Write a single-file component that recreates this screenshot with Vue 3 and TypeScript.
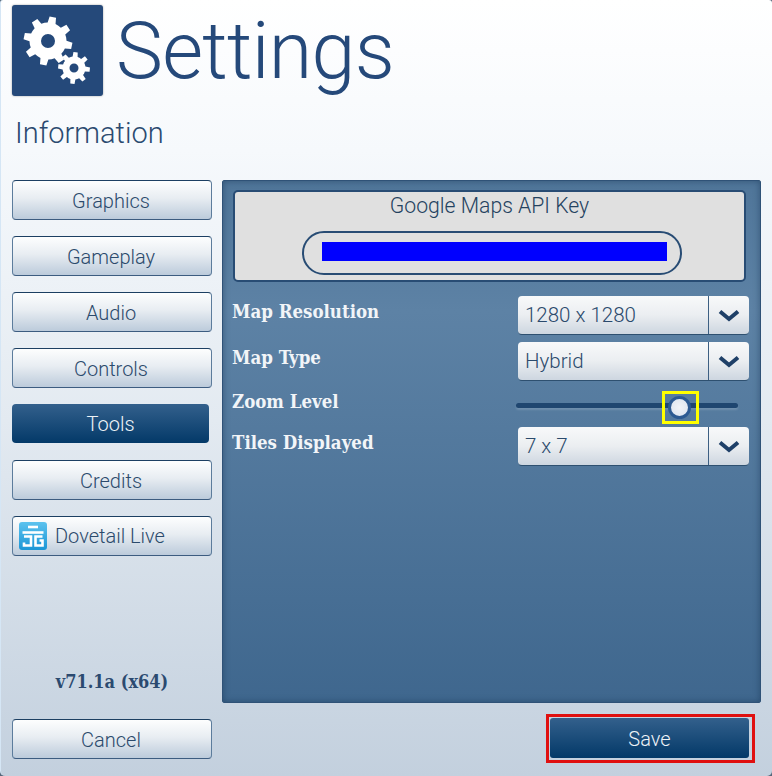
<script setup lang="ts">
const navItems = ["Graphics", "Gameplay", "Audio", "Controls", "Tools", "Credits"];

// builds a cog outline with a round hole in the middle
const gearPath = (cx: number, cy: number, outer: number, inner: number, hole: number, teeth: number, start = 0) => {
  const step = (Math.PI * 2) / teeth;
  const pts: string[] = [];
  for (let i = 0; i < teeth; i++) {
    const a = start + i * step;
    const corners: [number, number][] = [
      [a - step * 0.5, inner],
      [a - step * 0.28, inner],
      [a - step * 0.17, outer],
      [a + step * 0.17, outer],
      [a + step * 0.28, inner],
    ];
    for (const [ang, r] of corners) {
      pts.push(`${(cx + r * Math.cos(ang)).toFixed(2)} ${(cy + r * Math.sin(ang)).toFixed(2)}`);
    }
  }
  const ring = `M${cx - hole} ${cy}a${hole} ${hole} 0 1 0 ${hole * 2} 0a${hole} ${hole} 0 1 0 ${-hole * 2} 0Z`;
  return `M${pts.join("L")}Z${ring}`;
};

const bigGear = gearPath(36, 36, 24.5, 18.5, 7, 8, 0.2);
const smallGear = gearPath(62, 63, 16, 11.5, 4.5, 8, 0.1);
</script>

<template>
  <div class="page">
    <header class="head">
      <div class="logo">
        <svg width="91" height="91" viewBox="0 0 91 91">
          <path :d="bigGear" fill="#fff" fill-rule="evenodd" />
          <path :d="smallGear" fill="#fff" fill-rule="evenodd" />
        </svg>
      </div>
      <h1>Settings</h1>
    </header>
    <h2>Information</h2>

    <div class="main">
      <aside class="side">
        <nav class="nav">
          <button v-for="item in navItems" :key="item" class="btn" :class="{ active: item === 'Tools' }">{{ item }}</button>
          <button class="btn live">
            <svg class="live-logo" width="28" height="28" viewBox="0 0 28 28">
              <defs>
                <linearGradient id="liveBg" x1="0" y1="0" x2="0" y2="1">
                  <stop offset="0" stop-color="#5cc2ee" />
                  <stop offset="1" stop-color="#1c96d6" />
                </linearGradient>
              </defs>
              <rect width="28" height="28" rx="3" fill="url(#liveBg)" />
              <g fill="none" stroke="#fff" stroke-width="2.6">
                <path d="M9 5h10" />
                <path d="M3.5 10.5h21" />
                <path d="M5 14.5h7v9h-7v-3" />
                <path d="M23.5 14.5h-7v9h7v-5h-3" />
              </g>
            </svg>
            Dovetail Live
          </button>
        </nav>
        <div class="version">v71.1a (x64)</div>
        <button class="btn">Cancel</button>
      </aside>

      <div class="right">
        <section class="panel">
          <div class="key-card">
            <div class="key-title">Google Maps API Key</div>
            <div class="key-input"><span class="key-mask"></span></div>
          </div>

          <div class="rows">
            <label class="lbl">Map Resolution</label>
            <div class="select"><span>1280 x 1280</span><i class="arrow"><svg width="22" height="13" viewBox="0 0 22 13"><path d="M2 2.5 11 10l9-7.5" fill="none" stroke="#1f4068" stroke-width="4" /></svg></i></div>

            <label class="lbl">Map Type</label>
            <div class="select"><span>Hybrid</span><i class="arrow"><svg width="22" height="13" viewBox="0 0 22 13"><path d="M2 2.5 11 10l9-7.5" fill="none" stroke="#1f4068" stroke-width="4" /></svg></i></div>

            <label class="lbl zoom-lbl">Zoom Level</label>
            <div class="slider">
              <div class="track"></div>
              <div class="thumb-box"><span class="thumb"></span></div>
            </div>

            <label class="lbl">Tiles Displayed</label>
            <div class="select"><span>7 x 7</span><i class="arrow"><svg width="22" height="13" viewBox="0 0 22 13"><path d="M2 2.5 11 10l9-7.5" fill="none" stroke="#1f4068" stroke-width="4" /></svg></i></div>
          </div>
        </section>

        <div class="foot">
          <div class="save-ring"><button class="btn active save">Save</button></div>
        </div>
      </div>
    </div>
  </div>
</template>

<style>
html,
body {
  margin: 0;
  background: #55677a;
}
</style>

<style scoped>
.page {
  box-sizing: border-box;
  width: 772px;
  height: 776px;
  padding: 5px 11px 0 11px;
  border-left: 1px solid #d5e6f5;
  border-radius: 3px 3px 5px 5px;
  background: linear-gradient(#ffffff 0, #f6f9fc 150px, #e3eaf1 420px, #c3d0de 776px);
  font-family: Roboto, sans-serif;
  color: #2b4a70;
  overflow: hidden;
}
.head {
  display: flex;
  align-items: flex-start;
  height: 92px;
}
.logo {
  width: 91px;
  height: 91px;
  border-radius: 3px;
  background: #25497a;
  box-shadow: 0 0 2px rgba(0, 0, 0, 0.4);
  flex: none;
}
.logo svg {
  display: block;
}
h1 {
  margin: 0 0 0 13px;
  font-family: Roboto, sans-serif;
  font-weight: 300;
  font-size: 79px;
  line-height: 92px;
  height: 100px;
  letter-spacing: -0.7px;
  color: #25497a;
}
h2 {
  margin: 17px 0 0 3px;
  height: 39px;
  font-weight: 300;
  font-size: 29px;
  line-height: 39px;
  color: #2b4a70;
}
.main {
  display: flex;
  margin-top: 27px;
  height: 584px;
}
.side {
  width: 200px;
  flex: none;
  display: flex;
  flex-direction: column;
}
.nav {
  display: flex;
  flex-direction: column;
  gap: 16px;
}
.btn {
  box-sizing: border-box;
  display: block;
  width: 200px;
  height: 40px;
  padding: 1px 2px 0 0;
  border: 1px solid #1e4468;
  border-color: #1c3f62 #5c7c9c #3c5c80;
  border-radius: 4px;
  background: linear-gradient(#fdfefe 0, #e8edf2 45%, #bccbdb 100%);
  font-family: Roboto, sans-serif;
  font-size: 20px;
  font-weight: 300;
  color: #2b4a6c;
  text-align: center;
}
.btn.active {
  width: 197px;
  height: 39px;
  margin-bottom: 1px;
  padding: 0;
  border: 0;
  background: linear-gradient(#33608c 0, #033968 100%);
  color: #eef3f7;
}
.live {
  display: flex;
  align-items: center;
  padding: 0 0 0 6px;
  gap: 8px;
}
.live-logo {
  flex: none;
}
.version {
  margin-top: 113px;
  height: 50px;
  text-align: center;
  font-family: "DejaVu Serif Condensed", "DejaVu Serif", serif;
  font-weight: 700;
  font-size: 18px;
  line-height: 26px;
  color: #2b4a70;
}
.right {
  margin-left: 10px;
  width: 539px;
  display: flex;
  flex-direction: column;
}
.panel {
  box-sizing: border-box;
  height: 523px;
  padding: 9px 14px 0 10px;
  border: 1px solid #2f5277;
  border-radius: 2px;
  background: linear-gradient(#4f7599 0, #5d82a5 130px, #3f678e 100%);
  box-shadow: inset 0 0 6px rgba(20, 50, 80, 0.5);
}
.key-card {
  box-sizing: border-box;
  height: 92px;
  border: 2px solid #284c74;
  border-radius: 5px;
  background: #e0e0e0;
  display: flex;
  flex-direction: column;
  align-items: center;
}
.key-title {
  height: 39px;
  font-size: 21.2px;
  font-weight: 300;
  line-height: 28px;
  color: #24425f;
}
.key-input {
  box-sizing: border-box;
  width: 380px;
  height: 44px;
  margin-left: 5px;
  padding: 9px 13px 0 18px;
  border: 2px solid #284c74;
  border-radius: 22px;
}
.key-mask {
  display: block;
  height: 19px;
  background: #0000ff;
}
.rows {
  display: grid;
  grid-template-columns: 285px 231px;
  grid-template-rows: 39px 39px 32px 39px;
  row-gap: 7px;
  margin-top: 14px;
}
.lbl {
  margin-left: -1px;
  font-family: "DejaVu Serif Condensed", "DejaVu Serif", serif;
  font-weight: 700;
  font-size: 18.5px;
  line-height: 32px;
  color: #f2f5f8;
}
.zoom-lbl {
  line-height: 28px;
}
.select {
  box-sizing: border-box;
  display: flex;
  height: 39px;
  border-radius: 4px;
  border-bottom: 1px solid #2e5070;
  background: linear-gradient(#f8f9fa 0, #ebeef1 50%, #cdd6e0 100%);
  font-size: 20.5px;
  font-weight: 300;
  line-height: 38px;
  color: #2b4a6c;
  overflow: hidden;
}
.select span {
  flex: 1;
  padding-left: 7px;
}
.arrow {
  box-sizing: border-box;
  width: 41px;
  padding-top: 1px;
  border-left: 1px solid #3d5f82;
  display: flex;
  align-items: center;
  justify-content: center;
}
.slider {
  position: relative;
  height: 32px;
}
.track {
  position: absolute;
  left: -2px;
  top: 15px;
  width: 222px;
  height: 5px;
  border-radius: 3px;
  background: #1f4670;
  box-shadow: 0 2px 2px rgba(255, 255, 255, 0.15);
}
.thumb-box {
  box-sizing: border-box;
  position: absolute;
  left: 144px;
  top: 3px;
  width: 37px;
  height: 33px;
  padding-right: 2px;
  border: 3px solid #ffff00;
  display: flex;
  align-items: center;
  justify-content: center;
}
.thumb {
  box-sizing: border-box;
  width: 23px;
  height: 23px;
  border-radius: 50%;
  border: 3px solid #2c5a92;
  background: radial-gradient(#f0f3f8 0, #dbe3ee 100%);
}
.foot {
  display: flex;
  justify-content: flex-end;
  margin-top: 11px;
}
.save-ring {
  box-sizing: border-box;
  width: 209px;
  height: 49px;
  margin-right: 6px;
  border: 3px solid #e01010;
  padding: 1px;
}
.btn.save {
  width: 199px;
  height: 40px;
  padding-top: 1px;
  border-radius: 3px;
}
</style>
